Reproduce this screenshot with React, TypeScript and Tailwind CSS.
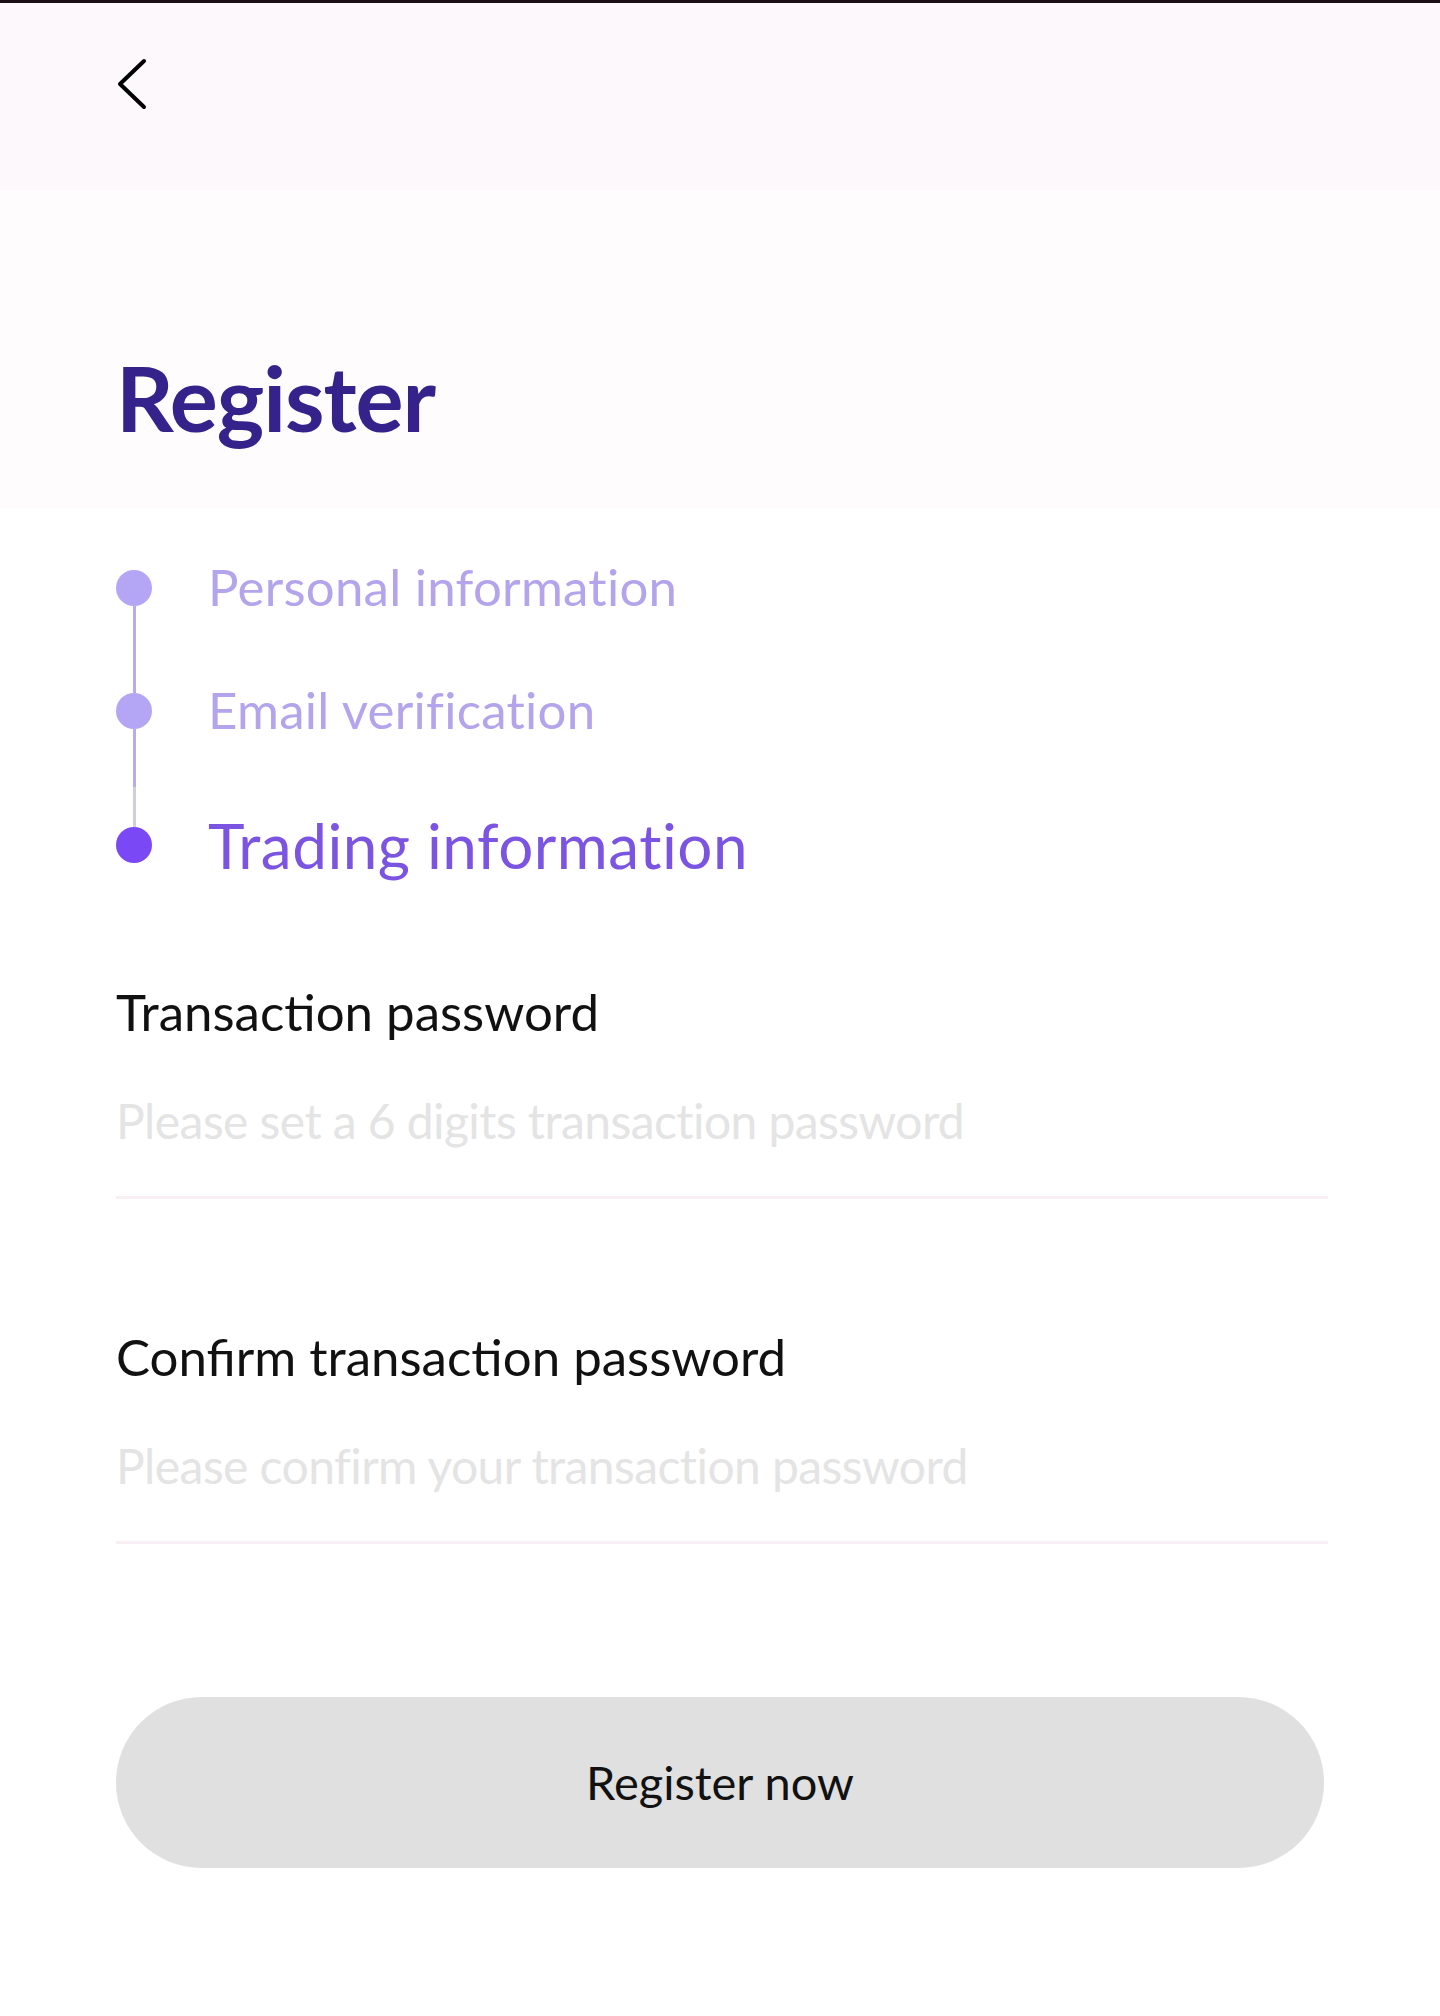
import React from "react";

const font = { fontFamily: "Lato, 'Noto Sans', sans-serif" };

const steps = [
  { label: "Personal information", done: true },
  { label: "Email verification", done: true },
  { label: "Trading information", done: false },
];

function Field({ label, placeholder }: { label: string; placeholder: string }) {
  return (
    <div className="flex flex-col">
      <label className="text-[51px] leading-[51px] text-[#111111]">{label}</label>
      <input
        type="password"
        placeholder={placeholder}
        className="mt-[8px] h-[154px] w-full border-b-[3px] border-[#f7eff3] bg-transparent text-[48px] tracking-[-0.012em] text-[#111] outline-none placeholder:text-[#e4e4e4]"
      />
    </div>
  );
}

export default function App() {
  return (
    <div className="min-h-[2016px] w-[1440px] bg-white" style={font}>
      <div className="h-[3px] bg-[#1c1016]" />

      {/* header tint */}
      <div className="h-[187px] bg-[#fdf8fb] pl-[114px] pt-[53px]">
        <button className="flex h-[56px] w-[40px] items-center">
          <svg width="34" height="54" viewBox="0 0 34 54" fill="none">
            <path d="M30 4 L6 27 L30 50" stroke="#000" strokeWidth="4" strokeLinecap="round" strokeLinejoin="round" />
          </svg>
        </button>
      </div>

      <div className="h-[318px] bg-[#fffcfd] pl-[116px] pt-[162px]">
        <h1 className="text-[90px] leading-[90px] font-bold tracking-[-0.012em] text-[#35228a]">Register</h1>
      </div>

      <div className="pl-[116px] pr-[112px]">
        {/* steps */}
        <div className="mt-[62px] flex flex-col">
          {steps.map((s, i) => (
            <React.Fragment key={s.label}>
              {i > 0 && (
                <div className="flex w-[36px] justify-center">
                  {i === 1 ? (
                    <div className="h-[87px] w-[3px] bg-[#b8aaf0]" />
                  ) : (
                    <div className="flex h-[98px] flex-col">
                      <div className="h-[58px] w-[3px] bg-[#b8aaf0]" />
                      <div className="h-[40px] w-[3px] bg-[#d2d0d6]" />
                    </div>
                  )}
                </div>
              )}
              <div className="flex h-[36px] items-center">
                <div className={`h-[36px] w-[36px] shrink-0 rounded-full ${s.done ? "bg-[#b5a6f5]" : "bg-[#7a48f4]"}`} />
                {s.done ? (
                  <span className="ml-[56px] -mt-[4px] text-[51px] leading-[51px] tracking-[0.005em] whitespace-nowrap text-[#b3a4ec]">{s.label}</span>
                ) : (
                  <span className="ml-[56px] text-[62px] leading-[62px] tracking-[0.008em] whitespace-nowrap text-[#7b55e2]">{s.label}</span>
                )}
              </div>
            </React.Fragment>
          ))}
        </div>

        <div className="mt-[123px] flex flex-col gap-[132px]">
          <Field label="Transaction password" placeholder="Please set a 6 digits transaction password" />
          <Field label="Confirm transaction password" placeholder="Please confirm your transaction password" />
        </div>

        <button className="mt-[153px] flex h-[171px] w-[1208px] items-center justify-center rounded-full bg-[#e0e0e0] text-[47px] text-[#111]">
          Register now
        </button>
      </div>
    </div>
  );
}
